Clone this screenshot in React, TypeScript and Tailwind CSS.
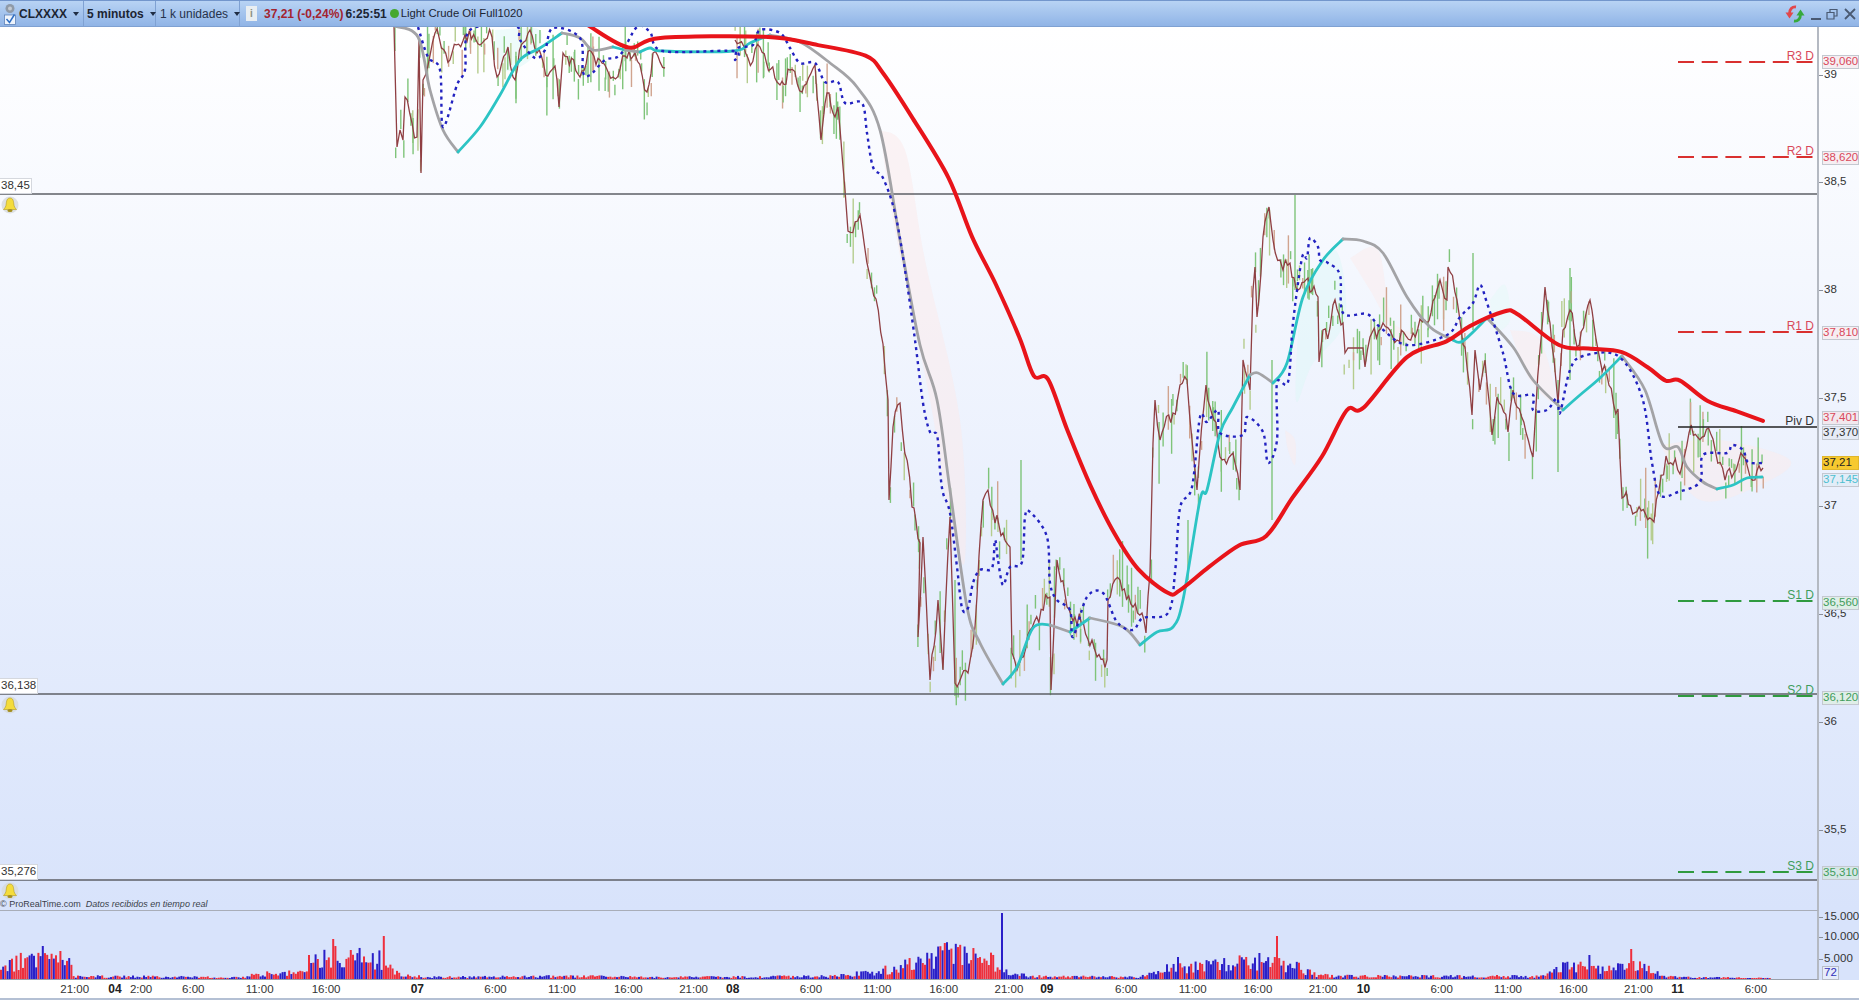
import React from 'react';

type Pt = [number, number];

const K = 1859 / 1568;
// points read off the shrunk screenshot
const s = (pts: Pt[]): Pt[] => pts.map(([x, y]) => [x * K, y * K] as Pt);

const rng = (seed: number) => () => {
  seed = (seed + 0x6d2b79f5) | 0;
  let t = Math.imul(seed ^ (seed >>> 15), 1 | seed);
  t = (t + Math.imul(t ^ (t >>> 7), 61 | t)) ^ t;
  return ((t ^ (t >>> 14)) >>> 0) / 4294967296;
};

const smooth = (p: Pt[]) => {
  let d = `M${p[0][0].toFixed(1)} ${p[0][1].toFixed(1)}`;
  for (let i = 0; i < p.length - 1; i++) {
    const a = p[Math.max(i - 1, 0)], b = p[i], c = p[i + 1], e = p[Math.min(i + 2, p.length - 1)];
    const c1x = b[0] + (c[0] - a[0]) / 6, c1y = b[1] + (c[1] - a[1]) / 6;
    const c2x = c[0] - (e[0] - b[0]) / 6, c2y = c[1] - (e[1] - b[1]) / 6;
    d += `C${c1x.toFixed(1)} ${c1y.toFixed(1)} ${c2x.toFixed(1)} ${c2y.toFixed(1)} ${c[0].toFixed(1)} ${c[1].toFixed(1)}`;
  }
  return d;
};

const red = s([[497, 22], [530, 40], [557, 32], [645, 31], [690, 38], [730, 47], [745, 62], [770, 100], [800, 150], [820, 200], [840, 240], [860, 285], [872, 317], [884, 320], [900, 362], [920, 410], [940, 450], [960, 480], [985, 500], [995, 498], [1020, 478], [1045, 460], [1068, 452], [1090, 420], [1115, 385], [1136, 346], [1150, 344], [1187, 301], [1220, 288], [1240, 275], [1268, 263], [1280, 265], [1315, 291], [1340, 294], [1368, 297], [1390, 310], [1405, 321], [1417, 321], [1440, 338], [1465, 347], [1487, 355]]);

const GRAY = '#a3a3a6';
const CYAN = '#2cc4c4';
const maSegments: { c: string; p: Pt[] }[] = [
  { c: GRAY, p: [[394, 26], [418, 37], [430, 90], [443, 130], [458, 152]] },
  { c: CYAN, p: [[458, 152], [480, 127], [500, 95], [520, 60], [540, 48], [562, 33]] },
  { c: GRAY, p: [[562, 33], [580, 38], [593, 50], [613, 47]] },
  { c: CYAN, p: [[613, 47], [625, 50]] },
  { c: GRAY, p: [[625, 50], [640, 52]] },
  { c: CYAN, p: [[640, 52], [650, 48], [663, 51], [733, 51], [750, 43], [770, 35]] },
  { c: GRAY, p: [[770, 35], [800, 42], [830, 63], [857, 87], [880, 130], [900, 240], [920, 345], [937, 400], [950, 490], [967, 607], [980, 643], [1003, 684]] },
  { c: CYAN, p: [[1003, 684], [1017, 667], [1033, 628], [1050, 625]] },
  { c: GRAY, p: [[1050, 625], [1070, 632]] },
  { c: CYAN, p: [[1070, 632], [1090, 618]] },
  { c: GRAY, p: [[1090, 618], [1123, 627], [1140, 645]] },
  { c: CYAN, p: [[1140, 645], [1157, 632], [1173, 627], [1183, 600], [1200, 500], [1207, 490], [1220, 433], [1233, 407], [1250, 375]] },
  { c: GRAY, p: [[1250, 375], [1258, 373], [1273, 383]] },
  { c: CYAN, p: [[1273, 383], [1287, 363], [1303, 297], [1323, 260], [1343, 239]] },
  { c: GRAY, p: [[1343, 239], [1363, 241], [1383, 253], [1407, 297], [1430, 327], [1453, 340]] },
  { c: CYAN, p: [[1453, 340], [1463, 341], [1487, 318]] },
  { c: GRAY, p: [[1487, 318], [1513, 347], [1533, 380], [1563, 410]] },
  { c: CYAN, p: [[1563, 410], [1580, 395], [1600, 378], [1622, 356]] },
  { c: GRAY, p: [[1622, 356], [1645, 390], [1663, 445], [1678, 447], [1687, 467], [1703, 482], [1717, 489]] },
  { c: CYAN, p: [[1717, 489], [1733, 485], [1747, 478], [1762, 477]] },
];

const blue: Pt[] = [[418, 27], [428, 57], [440, 70], [443, 127], [457, 85], [465, 70], [470, 30], [515, 26], [520, 40], [535, 58], [545, 50], [553, 28], [580, 38], [583, 72], [590, 75], [605, 60], [620, 55], [637, 27], [650, 32], [663, 51], [733, 51], [735, 60], [738, 48], [753, 45], [760, 30], [780, 33], [790, 48], [800, 63], [815, 63], [825, 82], [838, 82], [845, 103], [862, 103], [867, 133], [873, 167], [883, 178], [895, 213], [905, 270], [915, 340], [923, 403], [930, 432], [937, 435], [940, 470], [943, 493], [950, 513], [957, 567], [962, 608], [968, 608], [973, 583], [980, 570], [992, 568], [995, 540], [998, 560], [1003, 585], [1010, 567], [1022, 562], [1025, 517], [1030, 512], [1047, 537], [1050, 583], [1057, 600], [1070, 610], [1073, 637], [1087, 597], [1103, 593], [1117, 622], [1133, 630], [1143, 618], [1168, 613], [1175, 573], [1180, 508], [1192, 487], [1200, 417], [1207, 422], [1218, 410], [1220, 433], [1243, 435], [1247, 417], [1263, 432], [1268, 463], [1277, 440], [1277, 383], [1288, 382], [1293, 323], [1302, 258], [1307, 258], [1310, 238], [1318, 247], [1320, 260], [1328, 263], [1340, 275], [1343, 313], [1367, 314], [1380, 327], [1407, 345], [1447, 335], [1460, 317], [1473, 303], [1480, 285], [1487, 303], [1503, 353], [1513, 393], [1533, 395], [1533, 410], [1547, 410], [1557, 398], [1560, 413], [1570, 370], [1583, 356], [1618, 356], [1642, 397], [1652, 463], [1660, 495], [1678, 492], [1700, 482], [1703, 455], [1727, 453], [1732, 445], [1743, 450], [1748, 462], [1763, 463]];

const priceA: Pt[] = [[394, 27], [397, 147], [400, 130], [403, 140], [405, 97], [412, 123], [417, 137], [419, 40], [421, 173], [423, 80], [435, 33], [450, 60], [465, 35], [480, 45], [492, 37], [497, 77], [508, 47], [513, 77], [530, 30], [537, 53], [550, 72], [555, 66], [559, 107], [563, 53], [580, 77], [590, 50], [600, 60], [613, 77], [625, 56], [635, 53], [647, 92], [653, 53], [665, 68]];
const priceB: Pt[] = [[735, 40], [748, 58], [760, 47], [777, 82], [780, 85], [790, 70], [802, 92], [815, 65], [821, 140], [827, 93], [835, 117], [838, 107], [845, 190], [848, 231], [860, 215], [869, 272], [883, 344], [888, 400], [889, 500], [893, 427], [900, 403], [912, 507], [920, 543], [918, 637], [923, 537], [930, 680], [938, 600], [943, 670], [950, 517], [955, 683], [968, 673], [975, 627], [983, 500], [988, 490], [995, 523], [1003, 533], [1010, 547], [1012, 653], [1017, 670], [1030, 630], [1050, 597], [1051, 690], [1057, 560], [1067, 607], [1075, 617], [1092, 640], [1097, 657], [1107, 660], [1108, 600], [1120, 580], [1133, 607], [1142, 613], [1146, 633], [1150, 573], [1153, 443], [1155, 400], [1160, 440], [1173, 413], [1180, 385], [1187, 380], [1192, 440], [1197, 490], [1206, 385], [1214, 420], [1220, 457], [1233, 453], [1240, 490], [1243, 360], [1250, 390], [1253, 290], [1255, 267], [1257, 317], [1263, 237], [1269, 207], [1273, 240], [1280, 260], [1283, 270], [1290, 263], [1298, 290], [1308, 278], [1318, 297], [1319, 362], [1323, 330], [1330, 328], [1333, 305], [1343, 323], [1345, 353], [1348, 348], [1363, 348], [1365, 367], [1370, 337], [1383, 323], [1397, 340], [1413, 333], [1427, 323], [1437, 290], [1440, 280], [1447, 300], [1448, 267], [1457, 300], [1465, 347], [1472, 415], [1475, 350], [1480, 390], [1485, 360], [1492, 435], [1497, 397], [1508, 432], [1513, 390], [1517, 407], [1533, 457], [1540, 350], [1545, 287], [1550, 323], [1558, 403], [1563, 330], [1570, 310], [1577, 347], [1590, 300], [1600, 360], [1618, 409], [1622, 498], [1654, 522], [1666, 456], [1680, 474], [1689, 433], [1713, 439], [1725, 480], [1743, 456], [1755, 480], [1763, 468]];

const wiggle = (a: Pt[], seed: number) => {
  const r = rng(seed);
  const out: Pt[] = [];
  for (let i = 0; i < a.length - 1; i++) {
    const [x0, y0] = a[i], [x1, y1] = a[i + 1];
    const n = Math.max(1, Math.round((x1 - x0) / 2.2));
    for (let j = 0; j < n; j++) {
      const f = j / n;
      const x = x0 + (x1 - x0) * f;
      const noise = j && y0 !== y1 ? (r() - 0.5) * 12 + 5 * Math.sin(x / 2.7) : 0;
      out.push([x, y0 + (y1 - y0) * f + noise]);
    }
  }
  out.push(a[a.length - 1]);
  return out;
};

const polyD = (p: Pt[]) => 'M' + p.map(([x, y]) => `${x.toFixed(1)} ${y.toFixed(1)}`).join('L');

const pricePathA = wiggle(priceA, 7);
const pricePathB = wiggle(priceB, 21);

const makeBars = () => {
  const r = rng(99);
  const out: { x: number; y0: number; y1: number; c: string }[] = [];
  [...pricePathA, ...pricePathB].forEach(([x, y]) => {
    if (r() > 0.85) return;
    const len = 8 + r() * r() * 62;
    const off = (r() - 0.5) * 34;
    const pick = r();
    const c = pick < 0.62 ? '#7fc47a' : pick < 0.82 ? '#b5cc8e' : '#d0a48f';
    out.push({ x: x + (r() - 0.5) * 3, y0: y + off - len / 2, y1: y + off + len / 2, c });
  });
  // the long green wicks
  const long: [number, number, number][] = [[1295, 195, 290], [1473, 253, 330], [1570, 268, 380], [1558, 380, 472], [1188, 520, 580], [1272, 360, 520], [955, 580, 696], [1021, 460, 560]];
  long.forEach(([x, y0, y1]) => out.push({ x, y0, y1, c: '#7fc47a' }));
  return out;
};
const bars = makeBars();

const clouds: { c: string; p: Pt[] }[] = [
  { c: '#fbe9e9', p: [[880, 130], [905, 150], [925, 260], [960, 420], [965, 560], [950, 520], [930, 400], [895, 230]] },
  { c: '#ddf8f8', p: [[495, 30], [540, 30], [530, 60], [500, 70]] },
  { c: '#ddf8f8', p: [[1300, 300], [1335, 250], [1345, 320], [1312, 365], [1296, 400]] },
  { c: '#fbecec', p: [[1350, 258], [1378, 250], [1392, 320], [1420, 335], [1400, 340], [1370, 290]] },
  { c: '#e5f9f8', p: [[1490, 300], [1505, 285], [1510, 320], [1495, 330]] },
  { c: '#fbecec', p: [[1510, 330], [1540, 340], [1555, 400], [1530, 380]] },
  { c: '#fbecec', p: [[1660, 445], [1720, 440], [1790, 460], [1760, 485], [1700, 500]] },
  { c: '#fbecec', p: [[1285, 430], [1295, 440], [1295, 465], [1288, 450]] },
];

const levels = [
  { t: 'R3 D', y: 62, c: '#d9302f', tc: '#d9485a' },
  { t: 'R2 D', y: 157, c: '#d9302f', tc: '#d9485a' },
  { t: 'R1 D', y: 332, c: '#d9302f', tc: '#d9485a' },
  { t: 'S1 D', y: 601, c: '#2f9a3f', tc: '#3f9d5c' },
  { t: 'S2 D', y: 696, c: '#2f9a3f', tc: '#3f9d5c' },
  { t: 'S3 D', y: 872, c: '#2f9a3f', tc: '#3f9d5c' },
];

const alertLines = [
  { label: '38,45', y: 194 },
  { label: '36,138', y: 694 },
  { label: '35,276', y: 880 },
];

const axisTicks = [
  { t: '39', y: 75 }, { t: '38,5', y: 182 }, { t: '38', y: 290 }, { t: '37,5', y: 398 },
  { t: '37', y: 506 }, { t: '36,5', y: 614 }, { t: '36', y: 722 }, { t: '35,5', y: 830 },
];

const priceBoxes = [
  { t: '39,060', y: 62, cls: 'text-[#d9485a] bg-[#f6eef2] border-[#c4c8d0]' },
  { t: '38,620', y: 158, cls: 'text-[#d9485a] bg-[#f6eef2] border-[#c4c8d0]' },
  { t: '37,810', y: 333, cls: 'text-[#d9485a] bg-[#f6eef2] border-[#c4c8d0]' },
  { t: '37,401', y: 418, cls: 'text-[#d9485a] bg-[#f2e8ee] border-[#c4c8d0]' },
  { t: '37,370', y: 433, cls: 'text-[#333333] bg-[#e6ebf6] border-[#c4c8d0]' },
  { t: '37,21', y: 463, cls: 'text-[#222222] bg-[#f7c92f] border-[#e0b62c]' },
  { t: '37,145', y: 480, cls: 'text-[#4fbfd0] bg-[#e2edf8] border-[#c4c8d0]' },
  { t: '36,560', y: 603, cls: 'text-[#3f9d5c] bg-[#dfeee8] border-[#c4c8d0]' },
  { t: '36,120', y: 698, cls: 'text-[#3f9d5c] bg-[#dfeee8] border-[#c4c8d0]' },
  { t: '35,310', y: 873, cls: 'text-[#3f9d5c] bg-[#d5e6e6] border-[#c4c8d0]' },
];

const timeLabels: { t: string; x: number; bold?: boolean }[] = [
  { t: '21:00', x: 63 }, { t: '04', x: 97, bold: true }, { t: '2:00', x: 119 }, { t: '6:00', x: 163 }, { t: '11:00', x: 219 }, { t: '16:00', x: 275 },
  { t: '07', x: 352, bold: true }, { t: '6:00', x: 418 }, { t: '11:00', x: 474 }, { t: '16:00', x: 530 }, { t: '21:00', x: 585 },
  { t: '08', x: 618, bold: true }, { t: '6:00', x: 684 }, { t: '11:00', x: 740 }, { t: '16:00', x: 796 }, { t: '21:00', x: 851 },
  { t: '09', x: 883, bold: true }, { t: '6:00', x: 950 }, { t: '11:00', x: 1006 }, { t: '16:00', x: 1061 }, { t: '21:00', x: 1116 },
  { t: '10', x: 1150, bold: true }, { t: '6:00', x: 1216 }, { t: '11:00', x: 1272 }, { t: '16:00', x: 1327 }, { t: '21:00', x: 1382 },
  { t: '11', x: 1415, bold: true }, { t: '6:00', x: 1481 },
];

// volume envelope: shrunk x, bar height in px
const volEnv: Pt[] = [[0, 12], [20, 22], [45, 20], [58, 16], [62, 3], [200, 2], [225, 6], [255, 8], [265, 20], [285, 27], [320, 22], [335, 5], [360, 2], [480, 3], [560, 2], [700, 3], [740, 8], [770, 18], [800, 28], [835, 20], [850, 6], [870, 3], [960, 2], [985, 12], [1000, 12], [1040, 18], [1090, 16], [1110, 4], [1140, 3], [1300, 3], [1320, 14], [1350, 12], [1385, 14], [1400, 4], [1415, 2], [1490, 1], [1500, 0], [1530, 0]];
const volPeaks: Record<number, number> = { 36: 33, 844: 66, 1077: 43, 323: 43, 280: 40, 1375: 30, 1340: 24, 796: 36, 1062: 26, 260: 24, 50: 28, 992: 22 };

const envAt = (x: number) => {
  for (let i = 0; i < volEnv.length - 1; i++) {
    const [a, h0] = volEnv[i], [b, h1] = volEnv[i + 1];
    if (x >= a && x <= b) return h0 + (h1 - h0) * ((x - a) / (b - a));
  }
  return 0;
};

const makeVolume = () => {
  const r = rng(314);
  const out: { x: number; h: number; c: string }[] = [];
  let color = '#2a1fc8';
  for (let x = 0; x < 1770; x += 2.2) {
    const sx = x / K;
    let h = envAt(sx) * (0.4 + r() * 0.95);
    for (const p of Object.keys(volPeaks)) {
      if (Math.abs(sx - Number(p)) < 0.95) h = volPeaks[Number(p)];
    }
    if (r() > 0.6) color = color === '#2a1fc8' ? '#ee2f3c' : '#2a1fc8';
    if (h < 0.4) continue;
    out.push({ x, h: Math.max(h, 1), c: color });
  }
  return out;
};
const volumeBars = makeVolume();

const Bell = () => (
  <svg width="20" height="20" viewBox="0 0 20 20" className="block">
    <circle cx="10" cy="10" r="8.5" fill="#d6d9dc" opacity="0.8" />
    <path d="M10 3 C7 3 6.5 6 6.2 9 C6 11.5 5 13 3.5 14.5 H16.5 C15 13 14 11.5 13.8 9 C13.5 6 13 3 10 3 Z" fill="#f4dc3c" stroke="#b39a1e" strokeWidth="0.6" />
    <ellipse cx="10" cy="15.4" rx="2.6" ry="1.5" fill="#a58f1e" />
  </svg>
);

const Caret = () => <span className="ml-1.5 inline-block h-0 w-0 border-x-[3.5px] border-t-4 border-x-transparent border-t-[#1f2d44]" />;

const Toolbar = () => (
  <div className="flex h-[27px] items-center whitespace-nowrap border-y border-t-[#7396cc] border-b-[#7fa1d2] bg-linear-to-b from-[#b8d3f4] to-[#90b4e6] text-xs text-[#1c2533]">
    <div className="flex h-full w-[19px] items-center justify-center">
      <svg width="14" height="24" viewBox="0 0 14 24">
        <circle cx="7" cy="6.5" r="4.5" fill="#8f9aa8" />
        <circle cx="7" cy="6.5" r="2" fill="#c3cad2" />
        <rect x="1.5" y="13" width="11" height="9.5" fill="#eef4fc" stroke="#5f83b8" strokeWidth="0.8" />
        <path d="M3.5 17 L6.5 20.5 L11.5 12.5" fill="none" stroke="#2f6fc4" strokeWidth="1.5" />
      </svg>
    </div>
    <div className="flex h-full w-[65px] items-center border-r border-[#7fa1d2] font-bold">CLXXXX<Caret /></div>
    <div className="flex h-full w-[72px] items-center border-r border-[#7fa1d2] pl-[3px] font-bold">5 minutos<Caret /></div>
    <div className="flex h-full w-[84px] items-center border-r border-[#7fa1d2] pl-[4px] text-[#26324a]">1 k unidades<Caret /></div>
    <div className="ml-[6px] flex h-full items-center gap-[5px]">
      <span className="flex h-[15px] w-[11px] items-center justify-center bg-[#e9eef2] text-[10px] font-bold leading-none text-[#8a8f80]">i</span>
      <span className="ml-[2px] font-bold text-[#a3242f]">37,21 (-0,24%)</span>
      <span className="-ml-[3px] font-bold">6:25:51</span>
      <span className="-ml-[2px] h-[9px] w-[9px] rounded-full bg-[#45a82e]" />
      <span className="-ml-[3px] text-[11.3px]">Light Crude Oil Full1020</span>
    </div>
    <div className="ml-auto flex h-full items-center pr-[3px]">
      <svg width="22" height="22" viewBox="0 0 22 22">
        <path d="M12 4 C8 3.5 5.5 6.5 5.5 10.5" fill="none" stroke="#e2474b" strokeWidth="2.8" />
        <path d="M1.5 9.5 H9.5 L5.5 15.5 Z" fill="#e2474b" />
        <path d="M10 18 C14 18.5 16.5 15.5 16.5 11.5" fill="none" stroke="#36a93c" strokeWidth="2.8" />
        <path d="M12.5 12.5 H20.5 L16.5 6.5 Z" fill="#36a93c" />
      </svg>
      <span className="ml-[5px] mt-[10px] h-[2px] w-[10px] bg-[#4a5a72]" />
      <svg width="12" height="12" viewBox="0 0 12 12" className="ml-[5px]">
        <path d="M1 4.5 H8 V11 H1 Z M4 4 V1.5 H11 V8 H8.5" fill="none" stroke="#4a5a72" strokeWidth="1.2" />
      </svg>
      <svg width="12" height="12" viewBox="0 0 12 12" className="ml-[6px]">
        <path d="M1 1 L11 11 M11 1 L1 11" stroke="#4a5a72" strokeWidth="1.8" />
      </svg>
    </div>
  </div>
);

const MainChart = () => (
  <div className="relative h-[883px] flex-1 border-r-2 border-[#b4b9c2] bg-linear-to-b from-white to-[#d8e3fb]">
    <svg width="1817" height="883" viewBox="0 27 1817 883" className="block">
      {clouds.map((c, i) => (
        <path key={i} d={smooth([...c.p, c.p[0]])} fill={c.c} opacity="0.5" />
      ))}
      {bars.map((b, i) => (
        <line key={i} x1={b.x} x2={b.x} y1={b.y0} y2={b.y1} stroke={b.c} strokeWidth="1.4" />
      ))}
      <path d={polyD(pricePathA)} fill="none" stroke="#8f3f43" strokeWidth="1.3" />
      <path d={polyD(pricePathB)} fill="none" stroke="#8f3f43" strokeWidth="1.3" />
      {alertLines.map((l) => (
        <line key={l.label} x1="0" x2="1817" y1={l.y} y2={l.y} stroke="#5d5f66" strokeWidth="1.3" />
      ))}
      {maSegments.map((m, i) => (
        <path key={i} d={smooth(m.p)} fill="none" stroke={m.c} strokeWidth="2.8" strokeLinecap="round" />
      ))}
      <path d={smooth(blue)} fill="none" stroke="#2222c0" strokeWidth="2.4" strokeDasharray="3 4" />
      <path d={smooth(red)} fill="none" stroke="#e8141a" strokeWidth="4" strokeLinecap="round" strokeLinejoin="round" />
      {levels.map((l) => (
        <g key={l.t}>
          <line x1="1678" x2="1813" y1={l.y} y2={l.y} stroke={l.c} strokeWidth="2" strokeDasharray="16 7.7" />
          <text x="1814" y={l.y - 2} textAnchor="end" fontSize="12" fontFamily="Liberation Sans" fill={l.tc}>{l.t}</text>
        </g>
      ))}
      <line x1="1678" x2="1817" y1="427" y2="427" stroke="#222222" strokeWidth="1.6" />
      <text x="1814" y="425" textAnchor="end" fontSize="12" fontFamily="Liberation Sans" fill="#333333">Piv D</text>
    </svg>
    {alertLines.map((l) => (
      <React.Fragment key={l.label}>
        <div className="absolute left-0 flex h-[16px] items-center border border-l-0 border-[#d5d8de] bg-white px-[1px] text-[11.5px] text-[#333333]" style={{ top: l.y - 43 }}>
          {l.label}
        </div>
        <div className="absolute left-0" style={{ top: l.y - 26 }}><Bell /></div>
      </React.Fragment>
    ))}
    <div className="absolute bottom-[1px] left-0 flex gap-[5px] text-[9px] leading-none text-[#3a3f4a]">
      <span>© ProRealTime.com</span>
      <span className="italic">Datos recibidos en tiempo real</span>
    </div>
  </div>
);

const PriceAxis = () => (
  <div className="relative h-[883px] w-[40px] bg-linear-to-b from-white to-[#d8e3fb] text-[11.5px] text-[#333333]">
    {axisTicks.map((t) => (
      <div key={t.t} className="absolute left-0 flex h-[14px] items-center" style={{ top: t.y - 34 }}>
        <span className="mr-[1px] h-px w-[4px] bg-[#8a8f99]" />
        <span>{t.t}</span>
      </div>
    ))}
    {priceBoxes.map((b) => (
      <div key={b.t} className={`absolute left-[3px] flex h-[14px] w-[37px] items-center overflow-visible border ${b.cls}`} style={{ top: b.y - 34 }}>
        {b.t}
      </div>
    ))}
  </div>
);

const VolumeChart = () => (
  <div className="h-[70px] flex-1 border-y border-r-2 border-t-[#a8adb8] border-b-[#9aa0ac] border-r-[#b4b9c2] bg-[#d8e3fb]">
    <svg width="1817" height="68" viewBox="0 0 1817 68" className="block">
      {volumeBars.map((b, i) => (
        <rect key={i} x={b.x} y={68 - b.h} width="2" height={b.h} fill={b.c} />
      ))}
    </svg>
  </div>
);

const VolumeAxis = () => (
  <div className="relative h-[70px] w-[40px] bg-[#d8e3fb] text-[11.5px] text-[#333333]">
    {[{ t: '15.000', y: 7 }, { t: '10.000', y: 27 }, { t: '5.000', y: 49 }].map((v) => (
      <div key={v.t} className="absolute left-0 flex h-[14px] items-center" style={{ top: v.y - 7 }}>
        <span className="mr-[1px] h-px w-[4px] bg-[#8a8f99]" />
        <span>{v.t}</span>
      </div>
    ))}
    <div className="absolute left-[3px] top-[56px] flex h-[14px] items-center border border-[#b7bcc6] bg-[#e6ecfa] px-[1px] text-[#3030b8]">72</div>
  </div>
);

const TimeAxis = () => (
  <div className="relative h-[20px] border-b-2 border-[#b4c0d4] bg-white text-[11.5px] text-[#333333]">
    {timeLabels.map((l, i) => (
      <span
        key={i}
        className={`absolute top-[2px] -translate-x-1/2 leading-[15px] ${l.bold ? 'text-[12px] font-bold text-[#222222]' : ''}`}
        style={{ left: l.x * K }}
      >
        {l.t}
      </span>
    ))}
  </div>
);

const App = () => (
  <div className="flex h-[1000px] w-[1859px] flex-col overflow-hidden bg-white font-['Liberation_Sans',Arial,sans-serif]">
    <Toolbar />
    <div className="flex">
      <MainChart />
      <PriceAxis />
    </div>
    <div className="flex">
      <VolumeChart />
      <VolumeAxis />
    </div>
    <TimeAxis />
  </div>
);

export default App;
